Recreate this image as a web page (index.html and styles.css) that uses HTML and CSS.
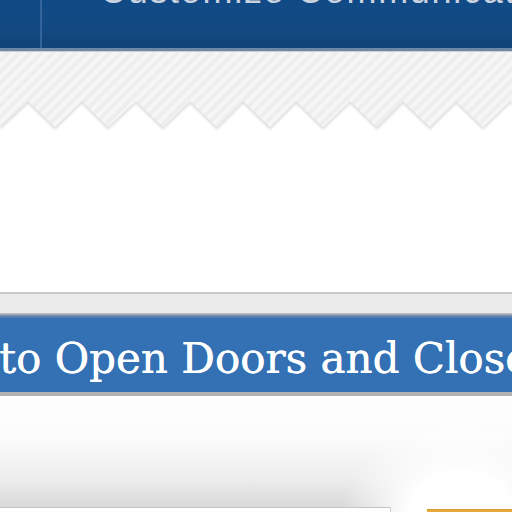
FILE: index.html
```html
<!DOCTYPE html>
<html>
<head>
<meta charset="utf-8">
<link rel="stylesheet" href="styles.css">
</head>
<body>
<header class="top">
  <div class="logo-col"></div>
  <div class="title">Customize Communicat</div>
</header>
<div class="zig">
  <svg width="512" height="80" viewBox="0 0 512 80">
    <defs>
      <pattern id="st" width="8" height="8" patternUnits="userSpaceOnUse" patternTransform="rotate(45)">
        <rect width="8" height="8" fill="#eeeeee"/>
        <rect width="4" height="8" fill="#f6f6f6"/>
      </pattern>
      <filter id="bl" x="-5%" y="-5%" width="110%" height="110%"><feGaussianBlur stdDeviation="1.2"/></filter>
    </defs>
    <polygon fill="#e2e2e2" filter="url(#bl)" points="0,0 512,0 512,54 510,52 483,78 456,52 430,78 403,52 377,78 350,52 323,78 296,52 270,78 243,52 217,78 190,52 163,78 136,52 108,78 82,52 55,78 28,52 0,78"/>
    <polygon fill="url(#st)" points="0,0 512,0 512,51 510,49 483,75 456,49 430,75 403,49 377,75 350,49 323,75 296,49 270,75 243,49 217,75 190,49 163,75 136,49 108,75 82,49 55,75 28,49 0,75"/>
  </svg>
</div>
<div class="gap"></div>
<section class="bar">
  <div class="bar-top"></div>
  <div class="bar-shade"></div>
  <div class="bar-blue"><h1 class="headline">to Open Doors and Close</h1></div>
  <div class="bar-bottom"></div>
</section>
<div class="foot">
  <div class="glow"></div>
  <div class="foot-row">
    <div class="card"></div>
    <div class="orange"></div>
  </div>
</div>
</body>
</html>
```
FILE: styles.css
```css
html, body { margin: 0; padding: 0; background: #fff; width: 512px; height: 512px; overflow: hidden; }
.top {
  height: 48px;
  display: flex;
  background: linear-gradient(180deg, #104a86 0%, #134a82 60%, #114477 100%);
  border-bottom: 3px solid #6f87a3;
  box-shadow: 0 1px 0 #c9d0d9;
  overflow: hidden;
}
.logo-col { width: 40px; border-right: 2px solid #33649c; flex: none; }
.title {
  margin-left: 58px;
  margin-top: -27px;
  font-family: "Liberation Sans", Arial, sans-serif;
  font-size: 36px;
  line-height: 36px;
  letter-spacing: 1.7px;
  color: #c9d2de;
  white-space: nowrap;
}
.zig { height: 80px; line-height: 0; margin-top: 1px; }
.zig svg { display: block; }
.gap { height: 160px; }
.bar-top { height: 2px; background: #c8c8c8; }
.bar-shade { height: 19px; background: #ebebeb; }
.bar-blue {
  height: 79px;
  background: linear-gradient(180deg, #c9c9c9 0px, #8a9bb0 2px, #6d86a6 3px, #4275b2 5px, #3371b4 6px, #3371b4 100%);
  overflow: hidden;
}
.headline {
  margin: 0;
  padding-top: 20px;
  font-family: "DejaVu Serif", Georgia, serif;
  font-weight: normal;
  font-size: 42px;
  line-height: 52px;
  color: #fff;
  white-space: nowrap;
  margin-left: -1px;
  text-shadow: 0.4px 0 0 #fff;
}
.bar-bottom { height: 4px; background: #b3b3b3; }
.foot {
  position: relative;
  height: 116px;
  background: linear-gradient(180deg, #fefefe 0%, #fcfcfc 35%, #eeeeee 70%, #d9d9d9 96%);
}
.glow {
  position: absolute;
  left: 340px; top: 20px; width: 220px; height: 140px;
  background: radial-gradient(ellipse at 55% 70%, #ffffff 30%, rgba(255,255,255,0) 70%);
}
.foot-row { position: absolute; left: 0; right: 0; top: 111px; display: flex; height: 10px; }
.card { width: 390px; background: #fff; border-top: 1px solid #c4c4c4; border-right: 1px solid #cfcfcf; }
.orange { margin-left: 36px; flex: 1; margin-top: 2px; background: #e8a93a; border-top: 1px solid #d59a30; }
```
